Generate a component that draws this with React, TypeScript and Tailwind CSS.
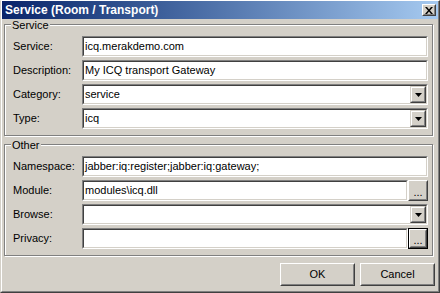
const face = "bg-[#d4d0c8]";

function Raised({ children, className = "" }: { children?: React.ReactNode; className?: string }) {
  return (
    <div className={`border border-t-white border-l-white border-r-[#404040] border-b-[#404040] ${className}`}>
      <div className={`h-full w-full border border-t-[#d4d0c8] border-l-[#d4d0c8] border-r-[#808080] border-b-[#808080] ${face} flex items-center justify-center`}>
        {children}
      </div>
    </div>
  );
}

function Sunken({ children, className = "" }: { children?: React.ReactNode; className?: string }) {
  return (
    <div className={`h-[21px] border border-t-[#808080] border-l-[#808080] border-r-white border-b-white ${className}`}>
      <div className="h-full w-full border border-t-[#404040] border-l-[#404040] border-r-[#d4d0c8] border-b-[#d4d0c8] bg-white flex items-center">
        {children}
      </div>
    </div>
  );
}

function Arrow() {
  return (
    <svg width="7" height="4" viewBox="0 0 7 4">
      <path d="M0 0h7L3.5 4z" fill="#000" />
    </svg>
  );
}

function TextField({ value }: { value?: string }) {
  return (
    <Sunken className="flex-1">
      <span className="pl-[1px] whitespace-nowrap">{value}</span>
    </Sunken>
  );
}

function Combo({ value }: { value?: string }) {
  return (
    <Sunken className="flex-1">
      <span className="pl-[1px] flex-1 whitespace-nowrap">{value}</span>
      <div className="w-[16px] h-full border border-t-[#d4d0c8] border-l-[#d4d0c8] border-r-[#404040] border-b-[#404040]">
        <div className="h-full w-full border border-t-white border-l-white border-r-[#808080] border-b-[#808080] bg-[#d4d0c8] flex items-center justify-center">
          <Arrow />
        </div>
      </div>
    </Sunken>
  );
}

function Browse({ value, focused }: { value?: string; focused?: boolean }) {
  return (
    <div className="flex-1 flex">
      <TextField value={value} />
      {focused ? (
        <div className="w-[20px] h-[21px] border border-black">
          <Raised className="h-full w-full">
            <span className="leading-none pt-[4px]">...</span>
          </Raised>
        </div>
      ) : (
        <Raised className="w-[20px] h-[21px]">
          <span className="leading-none pt-[4px]">...</span>
        </Raised>
      )}
    </div>
  );
}

function Row({ label, children }: { label: string; children: React.ReactNode }) {
  return (
    <div className="flex items-center">
      <div className="w-[69px] shrink-0">{label}</div>
      {children}
    </div>
  );
}

function Group({ title, children, className = "" }: { title: string; children: React.ReactNode; className?: string }) {
  return (
    <div className={`relative mr-[3px] border border-[#808080] shadow-[inset_1px_1px_0_#fff,1px_1px_0_#fff] pt-[11px] pb-[6px] pl-[8px] pr-[4px] ${className}`}>
      <span className="absolute -top-[6px] left-[6px] px-[1px] leading-[13px] bg-[#d4d0c8]">{title}</span>
      <div className="flex flex-col gap-[3px]">{children}</div>
    </div>
  );
}

function Btn({ label }: { label: string }) {
  return (
    <Raised className="w-[75px] h-[23px]">
      <span>{label}</span>
    </Raised>
  );
}

export default function App() {
  return (
    <div className="w-[440px] h-[293px] bg-[#d4d0c8] border border-t-white border-l-[#d4d0c8] border-r-[#404040] border-b-[#404040] font-['Liberation_Sans',Arial,sans-serif] text-[11px] text-black leading-[13px]">
      <div className="h-full border-l border-r border-b border-l-white border-r-[#808080] border-b-[#808080] flex flex-col">
        <div className="h-[18px] shrink-0 bg-gradient-to-r from-[#0a246a] to-[#a6caf0] flex items-center justify-between pl-[3px] pr-[2px]">
          <span className="text-white font-bold text-[12px]">Service (Room / Transport)</span>
          <Raised className="w-[14px] h-[12px]">
            <svg width="8" height="7" viewBox="0 0 8 7">
              <path d="M0 0h2l2 2.5L6 0h2L5 3.5 8 7H6L4 4.5 2 7H0l3-3.5z" fill="#000" />
            </svg>
          </Raised>
        </div>
        <div className="flex-1 flex flex-col px-[2px]">
          <Group title="Service" className="mt-[5px]">
            <Row label="Service:"><TextField value="icq.merakdemo.com" /></Row>
            <Row label="Description:"><TextField value="My ICQ transport Gateway" /></Row>
            <Row label="Category:"><Combo value="service" /></Row>
            <Row label="Type:"><Combo value="icq" /></Row>
          </Group>
          <Group title="Other" className="mt-[8px]">
            <Row label="Namespace:"><TextField value="jabber:iq:register;jabber:iq:gateway;" /></Row>
            <Row label="Module:"><Browse value="modules\icq.dll" /></Row>
            <Row label="Browse:"><Combo /></Row>
            <Row label="Privacy:"><Browse focused /></Row>
          </Group>
          <div className="mt-[7px] flex justify-end gap-[5px] pr-[1px]">
            <Btn label="OK" />
            <Btn label="Cancel" />
          </div>
        </div>
      </div>
    </div>
  );
}
